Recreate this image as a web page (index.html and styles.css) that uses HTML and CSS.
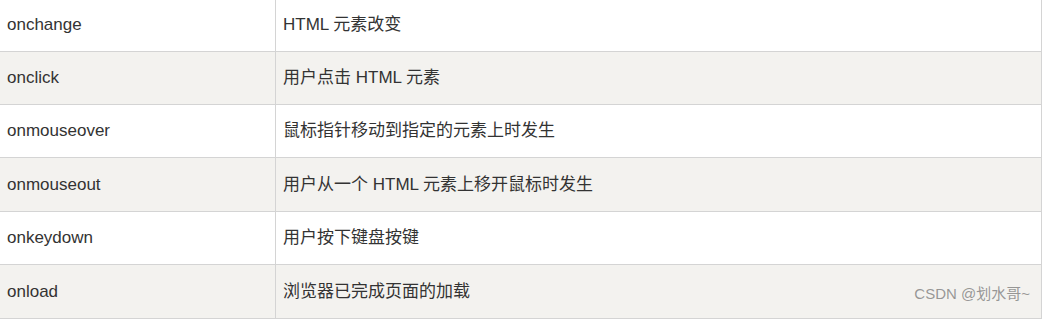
FILE: index.html
```html
<!DOCTYPE html>
<html lang="zh">
<head>
    <meta charset="UTF-8">
    <title>HTML 事件</title>
    <link rel="stylesheet" href="styles.css">
</head>
<body>
    <div class="page">
        <table class="event-table">
            <tr>
                <td class="event-name">onchange</td>
                <td>HTML 元素改变</td>
            </tr>
            <tr>
                <td class="event-name">onclick</td>
                <td>用户点击 HTML 元素</td>
            </tr>
            <tr>
                <td class="event-name">onmouseover</td>
                <td>鼠标指针移动到指定的元素上时发生</td>
            </tr>
            <tr>
                <td class="event-name">onmouseout</td>
                <td>用户从一个 HTML 元素上移开鼠标时发生</td>
            </tr>
            <tr>
                <td class="event-name">onkeydown</td>
                <td>用户按下键盘按键</td>
            </tr>
            <tr>
                <td class="event-name">onload</td>
                <td>浏览器已完成页面的加载</td>
            </tr>
        </table>
        <span class="watermark">CSDN @划水哥~</span>
    </div>
</body>
</html>
```

FILE: styles.css
```css
* {
    margin: 0;
    padding: 0;
    box-sizing: border-box;
}

body {
    background: #ffffff;
    color: #333333;
    font-family: 'Liberation Sans', Arial, 'Noto Sans CJK SC', sans-serif;
    font-size: 17px;
    overflow: hidden;
}

.page {
    position: relative;
    width: 1043px;
    height: 319px;
    overflow: hidden;
}

.event-table {
    border-collapse: collapse;
    width: 1043px;
    margin-top: -2.75px;
    margin-left: -1px;
}

.event-table td {
    height: 53.4px;
    padding: 0 7px;
    border: 1px solid #d4d4d4;
    vertical-align: middle;
    line-height: 1.5;
}

.event-table tr:nth-child(even) td {
    background: #f3f2ef;
}

.event-table .event-name {
    width: 276px;
}

.watermark {
    position: absolute;
    right: 13px;
    bottom: 16px;
    font-size: 15px;
    color: rgba(120, 120, 120, 0.75);
}
```
